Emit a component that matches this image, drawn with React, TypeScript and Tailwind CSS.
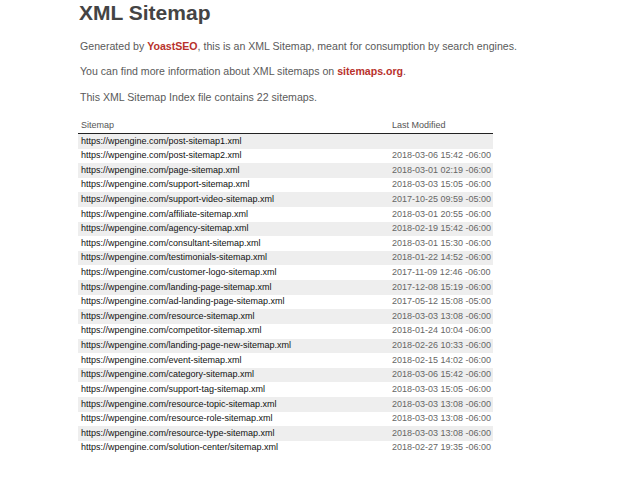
const rows: [string, string][] = [
  ['https://wpengine.com/post-sitemap1.xml', ''],
  ['https://wpengine.com/post-sitemap2.xml', '2018-03-06 15:42 -06:00'],
  ['https://wpengine.com/page-sitemap.xml', '2018-03-01 02:19 -06:00'],
  ['https://wpengine.com/support-sitemap.xml', '2018-03-03 15:05 -06:00'],
  ['https://wpengine.com/support-video-sitemap.xml', '2017-10-25 09:59 -05:00'],
  ['https://wpengine.com/affiliate-sitemap.xml', '2018-03-01 20:55 -06:00'],
  ['https://wpengine.com/agency-sitemap.xml', '2018-02-19 15:42 -06:00'],
  ['https://wpengine.com/consultant-sitemap.xml', '2018-03-01 15:30 -06:00'],
  ['https://wpengine.com/testimonials-sitemap.xml', '2018-01-22 14:52 -06:00'],
  ['https://wpengine.com/customer-logo-sitemap.xml', '2017-11-09 12:46 -06:00'],
  ['https://wpengine.com/landing-page-sitemap.xml', '2017-12-08 15:19 -06:00'],
  ['https://wpengine.com/ad-landing-page-sitemap.xml', '2017-05-12 15:08 -05:00'],
  ['https://wpengine.com/resource-sitemap.xml', '2018-03-03 13:08 -06:00'],
  ['https://wpengine.com/competitor-sitemap.xml', '2018-01-24 10:04 -06:00'],
  ['https://wpengine.com/landing-page-new-sitemap.xml', '2018-02-26 10:33 -06:00'],
  ['https://wpengine.com/event-sitemap.xml', '2018-02-15 14:02 -06:00'],
  ['https://wpengine.com/category-sitemap.xml', '2018-03-06 15:42 -06:00'],
  ['https://wpengine.com/support-tag-sitemap.xml', '2018-03-03 15:05 -06:00'],
  ['https://wpengine.com/resource-topic-sitemap.xml', '2018-03-03 13:08 -06:00'],
  ['https://wpengine.com/resource-role-sitemap.xml', '2018-03-03 13:08 -06:00'],
  ['https://wpengine.com/resource-type-sitemap.xml', '2018-03-03 13:08 -06:00'],
  ['https://wpengine.com/solution-center/sitemap.xml', '2018-02-27 19:35 -06:00'],
];

export default function App() {
  return (
    <div className="min-h-screen w-[630px] h-[477px] overflow-hidden bg-white pl-[78px] pt-px font-['Liberation_Sans',Arial,sans-serif]">
      <h1 className="pl-px text-[21px] leading-[24px] font-bold text-[#444]">XML Sitemap</h1>

      <div className="pl-[2px] text-[10.6px] leading-[13px] text-[#5a5a5a]">
        <p className="mt-[15px]">
          Generated by <span className="font-bold text-[#b8322c]">YoastSEO</span>, this is an XML Sitemap, meant for
          consumption by search engines.
        </p>
        <p className="mt-[12px]">
          You can find more information about XML sitemaps on{' '}
          <span className="font-bold text-[#b8322c]">sitemaps.org</span>.
        </p>
        <p className="mt-[13px]">This XML Sitemap Index file contains 22 sitemaps.</p>
      </div>

      <div className="mt-[15px] w-[415px] text-[9px]">
        <div className="flex h-[15px] items-center border-b border-[#222] text-[#555]">
          <div className="flex-1 pl-[3px]">Sitemap</div>
          <div className="w-[104px] pl-[3px]">Last Modified</div>
        </div>
        {rows.map(([url, date], i) => (
          <div key={url} className={`flex h-[14.62px] items-center ${i % 2 === 0 ? 'bg-[#eeeeee]' : 'bg-white'}`}>
            <div className="flex-1 pl-[3px] text-[#111]">{url}</div>
            <div className="w-[104px] pl-[3px] text-[#666]">{date}</div>
          </div>
        ))}
      </div>
    </div>
  );
}
